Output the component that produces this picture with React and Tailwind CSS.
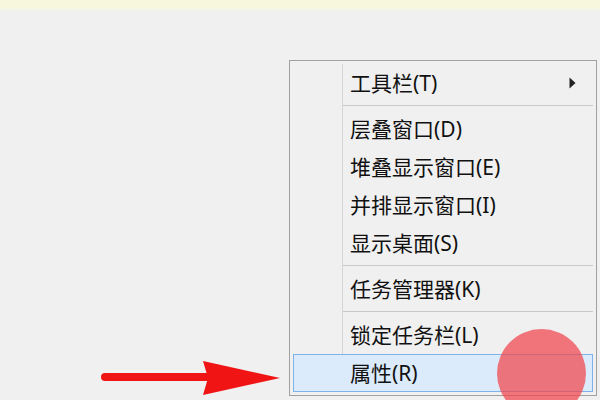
import React from "react";

const Sep = () => (
  <div className="flex h-[8px]">
    <div className="w-[49px] shrink-0" />
    <div className="flex-1 border-l border-[#d5d5d5] pt-[3px]">
      <div className="h-px bg-[#c9c9c9]" />
    </div>
  </div>
);

const Item = ({ label, sub }) => (
  <div className="flex h-[38px]">
    <div className="w-[49px] shrink-0" />
    <div className="flex flex-1 items-center border-l border-[#d5d5d5] pl-[7px]">
      <span>{label}</span>
      {sub && (
        <svg className="ml-auto mr-[17px]" width="7" height="12" viewBox="0 0 7 12">
          <path d="M0.5 0.5 L6.5 6 L0.5 11.5 Z" fill="#222" />
        </svg>
      )}
    </div>
  </div>
);

export default function App() {
  return (
    <div
      className="relative h-[400px] w-[600px] overflow-hidden bg-[#f0f0f0] text-[21px] leading-none text-[#111]"
      style={{ fontFamily: '"Noto Sans", "Noto Sans CJK SC", sans-serif' }}
    >
      <div className="h-[12px] bg-gradient-to-b from-[#f7f7de] from-60% to-[#f0f0f0]" />
      <div className="pl-[289px] pt-[48px]">
        <div className="w-[308px] border border-[#a0a0a0] bg-[#f0f0f0] px-[3px] py-[3px]">
          <Item label="工具栏(T)" sub />
          <Sep />
          <Item label="层叠窗口(D)" />
          <Item label="堆叠显示窗口(E)" />
          <Item label="并排显示窗口(I)" />
          <Item label="显示桌面(S)" />
          <Sep />
          <Item label="任务管理器(K)" />
          <Sep />
          <Item label="锁定任务栏(L)" />
          <div className="flex h-[38px] items-center border border-[#7db3ea] bg-[#dcebfc] pl-[56px]">
            <span>属性(R)</span>
          </div>
        </div>
      </div>

      <svg
        className="absolute left-[98px] top-[358px]"
        width="186"
        height="40"
        viewBox="0 0 186 40"
      >
        <line x1="7" y1="19" x2="112" y2="19" stroke="#f01414" strokeWidth="8" strokeLinecap="round" />
        <path d="M105 3 L182 20 L105 37 L110 20 Z" fill="#f01414" />
      </svg>

      <div className="absolute left-[497px] top-[329px] h-[89px] w-[89px] rounded-full bg-[rgba(240,70,77,0.73)]" />
    </div>
  );
}
